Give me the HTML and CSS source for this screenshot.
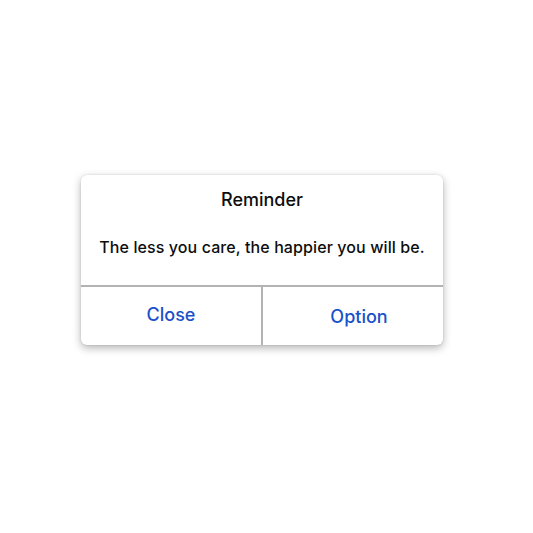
FILE: index.html
```html
<!DOCTYPE html>
<html>
<head>
<meta charset="utf-8">
<link rel="stylesheet" href="styles.css">
</head>
<body>
<div class="dialog">
  <div class="content">
    <div class="title">Reminder</div>
    <div class="message">The less you care, the happier you will be.</div>
  </div>
  <div class="actions">
    <button class="btn btn-close">Close</button>
    <button class="btn btn-option">Option</button>
  </div>
</div>
</body>
</html>
```
FILE: styles.css
```css
html, body {
  margin: 0;
  padding: 0;
  background: #fff;
}
body {
  padding: 175px 0 40px 81px;
  font-family: Inter, "Noto Sans", sans-serif;
}
.dialog {
  width: 362px;
  height: 170px;
  background: #fff;
  border-radius: 6px;
  box-shadow: 0 3px 8px rgba(0,0,0,0.3), 0 0 2px rgba(0,0,0,0.12);
  display: flex;
  flex-direction: column;
}
.content {
  height: 112px;
  border-bottom: 2px solid #b3b3b3;
  display: flex;
  flex-direction: column;
  align-items: center;
  box-sizing: border-box;
  padding-top: 14px;
}
.title {
  font-size: 18px;
  line-height: 22px;
  font-weight: 500;
  color: #0d0d0d;
}
.message {
  margin-top: 25px;
  font-size: 16px;
  line-height: 22px;
  font-weight: 500;
  letter-spacing: 0.1px;
  color: #0d0d0d;
}
.actions {
  flex: 1;
  display: flex;
}
.btn {
  border: none;
  background: transparent;
  font-family: inherit;
  font-size: 18px;
  font-weight: 500;
  color: #1b51c8;
  padding: 0;
  margin: 0;
}
.btn-close {
  width: 182px;
  border-right: 2px solid #b3b3b3;
  padding-bottom: 4px;
}
.btn-option {
  flex: 1;
  padding-left: 12px;
}
```
